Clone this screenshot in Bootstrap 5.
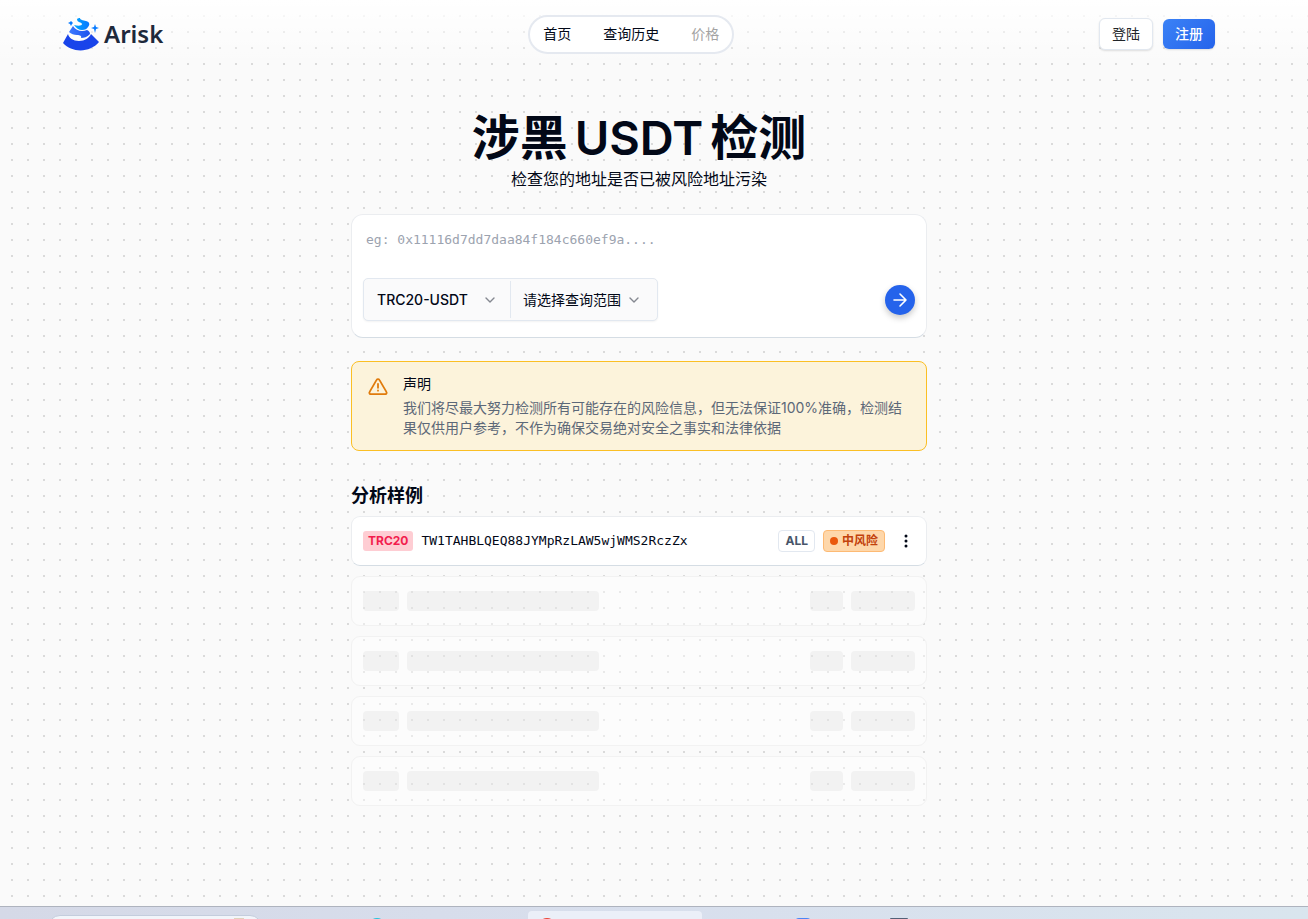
<!DOCTYPE html>
<html lang="zh-CN">
<head>
<meta charset="utf-8">
<meta name="viewport" content="width=device-width, initial-scale=1">
<title>Arisk</title>
<link href="https://cdn.jsdelivr.net/npm/bootstrap@5.3.0/dist/css/bootstrap.min.css" rel="stylesheet">
<style>
  :root { --ink: #020817; --line: #e2e8f0; }
  body { font-family: Inter, "Noto Sans CJK SC", sans-serif; font-size: 14px; line-height: 20px; color: var(--ink); background: #fafafa; }
  .dotted {
    background-image: linear-gradient(#fff, rgba(255,255,255,0) 64px), url("data:image/svg+xml,%3Csvg xmlns='http://www.w3.org/2000/svg' width='16' height='16'%3E%3Cpath fill='%23dadada' d='M11 0h2v1h-2zM11 15h2v1h-2z'/%3E%3C/svg%3E");
  }
  .shell { max-width: 1152px; }
  .gutter-end { padding-right: 30px; }
  .topbar { height: 68px; }
  .brand-name { font: 600 24px/32px "Noto Sans", sans-serif; color: #1e293b; }
  .pill { border: 2px solid #e5e9f0; background: #fff; height: 39px; gap: 32px; padding: 0 13px; }
  .pill a, .pill a:hover { color: var(--ink); }
  .pill a.off { color: #a3a3a3; }
  .btn-sm2 { font-size: 14px; line-height: 20px; padding: 5px 12px; border-radius: 6px; }
  .btn-plain { background: #fff; border: 1px solid var(--line); box-shadow: 0 1px 2px rgba(0,0,0,.12); }
  .btn-signup { color: #fff; background: linear-gradient(135deg, #3b82f6, #2563eb); border: 0; box-shadow: 0 1px 2px rgba(0,0,0,.12); font-weight: 500; }
  .btn-signup:hover { color: #fff; }
  .btn-group-end { gap: 10px; }
  .content { max-width: 576px; padding-top: 46px; }
  .headline { font-size: 48px; line-height: 48px; font-weight: 700; gap: 7px; }
  .headline .latin { font-weight: 600; font-size: 47px; }
  .sub { font-size: 16px; line-height: 24px; margin-top: 5px; }
  .panel { background: #fff; border: 1px solid #ebedf0; border-bottom-color: #d5dde4; border-radius: 12px; }
  .query { margin-top: 23px; padding: 12px 11px 16px; height: 124px; }
  .addr { font: 13px/20px "DejaVu Sans Mono", monospace; border: 0; padding: 3px; height: 40px; resize: none; }
  .addr::placeholder { color: #9ca3af; opacity: 1; }
  .addr:focus { box-shadow: none; }
  .picks { border: 1px solid var(--line); border-radius: 5px; background: #fafafb; height: 43px; box-shadow: 0 1px 2px rgba(0,0,0,.05); }
  .picks .form-select {
    border: 0; background-color: transparent; width: 146px; font-size: 14px; line-height: 20px; padding: 0 24px 0 13px; color: var(--ink);
    background-image: url("data:image/svg+xml,%3Csvg xmlns='http://www.w3.org/2000/svg' viewBox='0 0 16 16' fill='none' stroke='%23858890' stroke-width='1.4' stroke-linecap='round' stroke-linejoin='round'%3E%3Cpath d='M4 6l4 4 4-4'/%3E%3C/svg%3E");
    background-position: right 12px center; background-size: 16px; font-weight: 500;
  }
  .picks .form-select + .vr + .form-select { padding-left: 12px; background-position: right 15px center; font-weight: 400; }
  .picks .vr { background: var(--line); opacity: 1; margin: 2px 0; }
  .go { width: 30px; height: 30px; background: #2563eb; box-shadow: 0 3px 6px rgba(0,0,0,.22); }
  .notice { background: #fcf3db; border: 1px solid #fbbf24; border-radius: 8px; margin-top: 23px; padding: 12px 16px; gap: 15px; }
  .notice p { color: #5c6878; }
  .notice strong { font-weight: 400; line-height: 20px; }
  .samples { font-size: 18px; line-height: 28px; font-weight: 700; margin: 31px 0 6px; }
  .entries { gap: 10px; }
  .entry { height: 50px; border-radius: 9px; padding: 0 11px; }
  .chain, .scope, .risk { font-size: 12px; line-height: 20px; border-radius: 4px; font-weight: 700; }
  .chain { background: #fecdd3; color: #f21d4d; padding: 0 5px; border-radius: 3px; }
  .scope { border: 1px solid var(--line); color: #475569; padding: 0 6px; }
  .risk { border: 1px solid #fdba74; background: #fed7aa; color: #c2410c; padding: 0 6px; gap: 4px; }
  .risk i { width: 8px; height: 8px; background: #ea580c; }
  .hash { font: 13px/20px "DejaVu Sans Mono", monospace; color: var(--ink); }
  .ghost { background: rgba(255,255,255,.4); border-color: #f2f2f2; }
  .bone { height: 20px; border-radius: 4px; background: rgba(190,190,190,.16); }
  .w-a { width: 36px; } .w-b { width: 192px; } .w-c { width: 33px; } .w-d { width: 64px; }
  .dock { height: 13px; border-top: 1px solid #aeb3be; background: linear-gradient(90deg, #d5d9e7, #d8dfed 50%, #d9e5ee); }
  .dock-search { width: 214px; height: 40px; margin: 8px 0 0 48px; border-radius: 12px; background: #f2f5fa; border: 1px solid #c4cddd; }
  .dock-tab { width: 174px; height: 40px; margin: 4px 0 0 142px; border-radius: 4px; background: #ebeff8; padding: 7px 0 0 10px; }
  .dock-dot { width: 18px; height: 18px; margin: 11px 0 0 78px; }
  .dock-dot.far { margin-left: 106px; }
  .dock-dot.near { margin-left: 92px; }
</style>
</head>
<body class="d-flex flex-column min-vh-100">
<div class="dotted flex-grow-1 gutter-end">
  <header class="shell mx-auto topbar d-flex align-items-center justify-content-between">
    <a href="#" class="d-flex align-items-center text-decoration-none">
      <svg width="37" height="34" viewBox="0 0 37 34" class="me-1" aria-hidden="true">
        <defs>
          <linearGradient id="top" x1="0" x2="1"><stop stop-color="#00a8ff"/><stop offset="1" stop-color="#0878ff"/></linearGradient>
          <linearGradient id="mid" x1="0" x2="1"><stop stop-color="#3b78ff"/><stop offset="1" stop-color="#1d51ed"/></linearGradient>
        </defs>
        <path fill="url(#top)" d="M14 2c1-1 2-1 3-1 0 2 3 2 6 3 4 1 4 4 2 6-1 2-3 3-6 3-3 0-6-2-8-5 4 1 8 1 8-1 0-2-5-1-5-5Z"/>
        <path fill="url(#mid)" d="M10 9c3 5 9 6 14 4 2 1 3 2 3 4-3 3-6 4-9 4 1-2-1-3-4-3-3 0-6-1-8-3Z"/>
        <path fill="#1944ea" d="M5 17c1 4 5 7 11 7 6 0 10-3 12-7l8 8c-9 11-27 11-36 1Z"/>
        <path fill="#087bff" d="m32 7 1 3 3 1-3 1-1 4-1-4-3-1 3-1ZM8 4l1 1 1 1-1 1-1 2-1-2-2-1 2-1Z"/>
      </svg>
      <span class="brand-name">Arisk</span>
    </a>
    <nav class="pill rounded-pill d-flex align-items-center">
      <a href="#" class="text-decoration-none">首页</a>
      <a href="#" class="text-decoration-none">查询历史</a>
      <a href="#" class="text-decoration-none off">价格</a>
    </nav>
    <div class="d-flex align-items-center btn-group-end">
      <button type="button" class="btn btn-sm2 btn-plain">登陆</button>
      <button type="button" class="btn btn-sm2 btn-signup">注册</button>
    </div>
  </header>

  <main class="content mx-auto">
    <div class="text-center">
      <h1 class="headline mb-0 d-flex justify-content-center"><span>涉黑</span> <span class="latin">USDT</span> <span>检测</span></h1>
      <p class="sub mb-0">检查您的地址是否已被风险地址污染</p>
    </div>

    <form class="panel query d-flex flex-column justify-content-between" onsubmit="return false">
      <textarea class="form-control addr" rows="1" aria-label="地址" placeholder="eg: 0x11116d7dd7daa84f184c660ef9a...."></textarea>
      <div class="d-flex align-items-center justify-content-between">
        <div class="picks d-flex">
          <select class="form-select" aria-label="网络"><option>TRC20-USDT</option></select>
          <span class="vr"></span>
          <select class="form-select" aria-label="查询范围"><option>请选择查询范围</option></select>
        </div>
        <button type="submit" class="btn go rounded-circle p-0 d-flex align-items-center justify-content-center" aria-label="查询">
          <svg width="20" height="20" viewBox="0 0 20 20" fill="none" stroke="#fff" stroke-width="1.6" stroke-linecap="round" stroke-linejoin="round"><path d="M4 10h12M10 4l6 6-6 6"/></svg>
        </button>
      </div>
    </form>

    <section class="notice d-flex">
      <svg class="flex-shrink-0 mt-1" width="20" height="17" viewBox="0 0 20 17" fill="none" stroke="#e07b0c" stroke-width="1.8" stroke-linecap="round" stroke-linejoin="round" aria-hidden="true"><path d="M8.6 1.9a1.6 1.6 0 0 1 2.8 0l7 12a1.5 1.5 0 0 1-1.3 2.300H2.900a1.5 1.5 0 0 1-1.3-2.300ZM10 5.800v4M10 12.400v.3"/></svg>
      <div>
        <strong class="d-block mb-1">声明</strong>
        <p class="mb-0">我们将尽最大努力检测所有可能存在的风险信息，但无法保证100%准确，检测结果仅供用户参考，不作为确保交易绝对安全之事实和法律依据</p>
      </div>
    </section>

    <h2 class="samples">分析样例</h2>
    <div class="d-grid entries">
      <div class="panel entry d-flex align-items-center gap-2">
        <span class="chain">TRC20</span>
        <span class="hash me-auto">TW1TAHBLQEQ88JYMpRzLAW5wjWMS2RczZx</span>
        <span class="scope">ALL</span>
        <span class="risk d-flex align-items-center"><i class="rounded-circle"></i>中风险</span>
        <button type="button" class="btn border-0 p-0 ms-1 d-flex" aria-label="更多">
          <svg width="18" height="18" viewBox="0 0 18 18" fill="#020817"><circle cx="9" cy="4" r="1.5"/><circle cx="9" cy="9" r="1.5"/><circle cx="9" cy="14" r="1.5"/></svg>
        </button>
      </div>
      <div class="panel ghost entry d-flex align-items-center gap-2"><span class="bone w-a"></span><span class="bone w-b me-auto"></span><span class="bone w-c"></span><span class="bone w-d"></span></div>
      <div class="panel ghost entry d-flex align-items-center gap-2"><span class="bone w-a"></span><span class="bone w-b me-auto"></span><span class="bone w-c"></span><span class="bone w-d"></span></div>
      <div class="panel ghost entry d-flex align-items-center gap-2"><span class="bone w-a"></span><span class="bone w-b me-auto"></span><span class="bone w-c"></span><span class="bone w-d"></span></div>
      <div class="panel ghost entry d-flex align-items-center gap-2"><span class="bone w-a"></span><span class="bone w-b me-auto"></span><span class="bone w-c"></span><span class="bone w-d"></span></div>
    </div>
  </main>
</div>

<footer class="dock d-flex align-items-start overflow-hidden">
  <div class="dock-search flex-shrink-0 d-flex justify-content-end pe-3"><svg width="12" height="12"><path fill="#dfd3bd" d="M1 2h10v10H1z"/></svg></div>
  <svg class="dock-dot far flex-shrink-0" viewBox="0 0 18 18"><circle cx="9" cy="9" r="9" fill="#22c3dc"/></svg>
  <div class="dock-tab flex-shrink-0 d-flex"><svg width="18" height="18" viewBox="0 0 18 18"><circle cx="9" cy="9" r="9" fill="#ea4335"/></svg></div>
  <svg class="dock-dot near flex-shrink-0" viewBox="0 0 18 18"><rect width="18" height="18" rx="5" fill="#4a86f7"/></svg>
  <svg class="dock-dot flex-shrink-0" viewBox="0 0 18 18"><rect width="18" height="18" rx="1" fill="#536178"/></svg>
</footer>
<script src="https://cdn.jsdelivr.net/npm/bootstrap@5.3.0/dist/js/bootstrap.bundle.min.js"></script>
</body>
</html>
